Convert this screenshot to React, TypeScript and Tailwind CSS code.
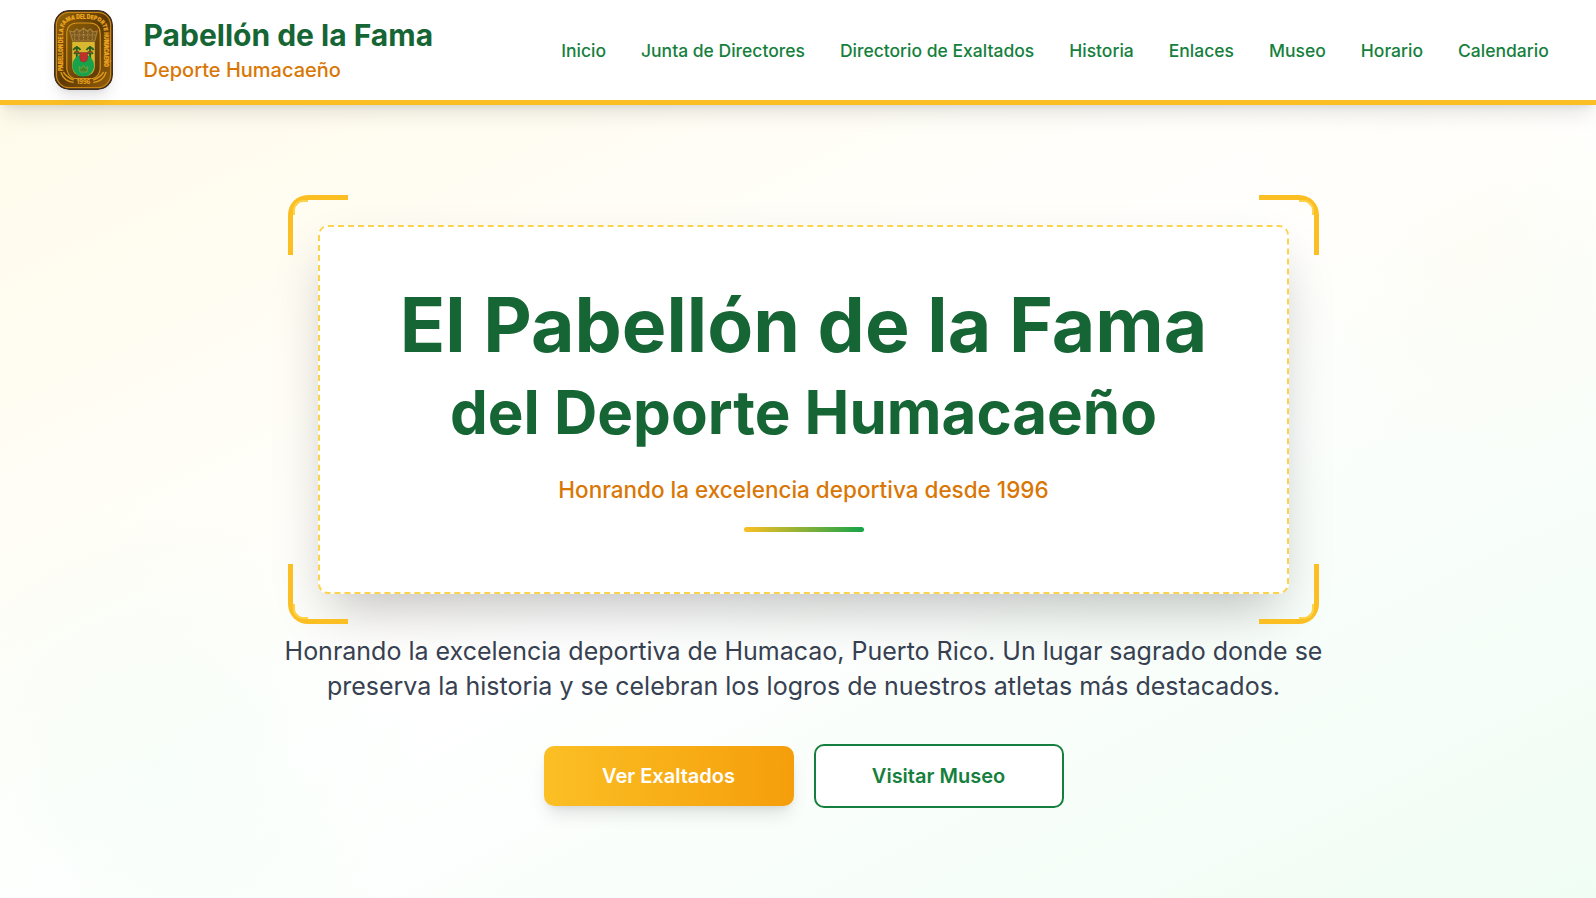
const navItems = ['Inicio', 'Junta de Directores', 'Directorio de Exaltados', 'Historia', 'Enlaces', 'Museo', 'Horario', 'Calendario'];

function Emblem() {
  return (
    <svg viewBox="0 0 60 80" preserveAspectRatio="none" className="h-20 w-[59px] shrink-0 rounded-[15px] shadow-[0_10px_15px_-3px_rgba(0,0,0,0.1),0_4px_6px_-4px_rgba(0,0,0,0.1)]" role="img" aria-label="Emblema">
      <defs>
        <linearGradient id="bronze" x1="0" y1="0" x2="1" y2="1">
          <stop offset="0" stopColor="#946309" />
          <stop offset="0.5" stopColor="#5c3904" />
          <stop offset="1" stopColor="#945e0a" />
        </linearGradient>
        <linearGradient id="panel" x1="0" y1="0" x2="1" y2="1">
          <stop offset="0" stopColor="#865a08" />
          <stop offset="1" stopColor="#5f3c08" />
        </linearGradient>
        <path id="arc" d="M9.2 61 V23 Q9.2 9.4 23 9.4 H37 Q50.8 9.4 50.8 23 V61" />
      </defs>
      <rect width="60" height="80" rx="15" fill="#3f3020" />
      <rect x="2.4" y="2.4" width="55.2" height="75.2" rx="12.8" fill="url(#bronze)" stroke="#c98412" strokeWidth="1.3" />
      <path d="M13 59 V24 Q13 13 24 13 H36 Q47 13 47 24 V59 Q46 66 40 68.5 H20 Q14 66 13 59 Z" fill="url(#panel)" stroke="#d8921a" strokeWidth="1.2" />
      <text fontFamily="Inter, sans-serif" fontWeight="900" fontSize="5.8" fill="#eba41f" stroke="#eba41f" strokeWidth="0.2">
        <textPath href="#arc" textLength="130" lengthAdjust="spacingAndGlyphs">PABELLON DE LA FAMA DEL DEPORTE HUMACAEÑO</textPath>
      </text>
      <path d="M16 21 l4 1 3-3 3.5 2 3.5-3 3.5 3 3.5-2 3 3 4-1 -2.5 10 H19 Z" fill="#7d5a20" stroke="#a98038" strokeWidth="1.1" />
      <path d="M18 25 H42 M21 21 V30 M25.5 21 V30 M30 19 V30 M34.5 21 V30 M39 21 V30" stroke="#b58c42" strokeWidth="1" strokeDasharray="1.5 1" />
      <path d="M18.5 32 H41.5 V56 Q41.5 66 30 66 Q18.5 66 18.5 56 Z" fill="#d9b72e" />
      <path d="M19.5 40 q3.7-5 7.4 0 M33 40 q3.7-5 7.4 0 M20.5 44 q2.7-5 5.4 0 M34 44 q2.7-5 5.4 0 M23.2 36 V49 M36.7 36 V49" fill="none" stroke="#28601f" strokeWidth="2" />
      <path d="M21 42 h4.5 M34.5 42 H39" stroke="#a8472a" strokeWidth="1.4" />
      <circle cx="29.7" cy="55.5" r="11" fill="#18a24c" />
      <path d="M26.3 42.5 H34 V48 Q34 52 30.2 52 Q26.3 52 26.3 48 Z" fill="#c3302c" stroke="#8a2b20" strokeWidth="0.5" />
      <path d="M25.5 56.5 l2.2 2 2.3-3 2.3 3 2.2-2 -1 5.5 H26.5 Z" fill="#3f8a2c" stroke="#9aa336" strokeWidth="0.7" />
      <path d="M7 62 Q10 71.5 20 72.5 M53 62 Q50 71.5 40 72.5 M9.5 62 Q13 67.5 20 70 M50.5 62 Q47 67.5 40 70" fill="none" stroke="#d8951a" strokeWidth="1.5" />
      <text x="30" y="74" textAnchor="middle" fontFamily="Inter, sans-serif" fontWeight="900" fontSize="5.6" fill="#e39c1c">1996</text>
    </svg>
  );
}

function Corner({ className, accent }: { className: string; accent: string }) {
  return (
    <div className={`absolute size-[60px] border-[#fbbf24] ${className}`}>
      <div className={`absolute size-[15px] border-[#fcd34d] ${accent}`} />
    </div>
  );
}

export default function App() {
  return (
    <div className="flex h-[898px] flex-col overflow-hidden bg-white font-['Inter',sans-serif]">
      <header className="relative z-10 flex h-[105px] shrink-0 items-center justify-between border-b-[5px] border-[#fbbf24] bg-white pr-[47.3px] pl-[54px] shadow-[0_12px_20px_-4px_rgba(0,0,0,0.11),0_4px_8px_-4px_rgba(0,0,0,0.1)]">
        <div className="flex items-center gap-[30.5px]">
          <Emblem />
          <div>
            <div className="text-[30px] leading-[40px] font-bold text-[#166534]">Pabellón de la Fama</div>
            <div className="text-[20px] leading-[30px] font-medium text-[#d97706]">Deporte Humacaeño</div>
          </div>
        </div>
        <nav className="flex gap-[35px] text-[17.5px] leading-[25px] font-medium whitespace-nowrap text-[#15803d]">
          {navItems.map((item) => (
            <a key={item} href="#">{item}</a>
          ))}
        </nav>
      </header>

      <main className="relative isolate flex flex-1 flex-col items-center overflow-hidden bg-[linear-gradient(to_bottom_right,#fffbeb_0%,#ffffff_50%,#f0fdf4_100%)] pt-[120px] pl-[11px]">
        <div className="absolute top-[-100px] right-[-130px] -z-10 size-[500px] bg-[radial-gradient(circle,rgba(254,243,199,0.14)_0%,rgba(254,243,199,0)_70%)]" />
        <div className="absolute bottom-[-130px] left-[-110px] -z-10 size-[530px] bg-[radial-gradient(circle,rgba(220,252,231,0.22)_0%,rgba(220,252,231,0)_70%)]" />
        <section className="relative flex h-[369px] w-[971px] flex-col items-center rounded-[10px] border-2 border-dashed border-[#fcd34d] bg-white pt-[60px] shadow-[0_25px_50px_-12px_rgba(0,0,0,0.25)]">
          <Corner className="-top-8 -left-8 rounded-tl-[20px] border-t-[5px] border-l-[5px]" accent="top-0 left-0 rounded-tl-[10px] border-t-2 border-l-2" />
          <Corner className="-top-8 -right-8 rounded-tr-[20px] border-t-[5px] border-r-[5px]" accent="top-0 right-0 rounded-tr-[10px] border-t-2 border-r-2" />
          <Corner className="-bottom-8 -left-8 rounded-bl-[20px] border-b-[5px] border-l-[5px]" accent="bottom-0 left-0 rounded-bl-[10px] border-b-2 border-l-2" />
          <Corner className="-right-8 -bottom-8 rounded-br-[20px] border-r-[5px] border-b-[5px]" accent="right-0 bottom-0 rounded-br-[10px] border-r-2 border-b-2" />
          <h1 className="flex flex-col items-center font-bold whitespace-nowrap text-[#166534]">
            <span className="text-[75px] leading-[75px]">El Pabellón de la Fama</span>
            <span className="mt-[20px] text-[60px] leading-[60px]">del Deporte Humacaeño</span>
          </h1>
          <p className="mt-[30px] text-[22.5px] leading-[35px] font-medium text-[#d97706]">Honrando la excelencia deportiva desde 1996</p>
          <div className="mt-5 h-[5px] w-[120px] rounded-full bg-[linear-gradient(to_right,#fbbf24,#16a34a)]" />
        </section>
        <p className="mt-[40px] w-[1120px] text-center text-[25px] leading-[35px] text-[#374151]">
          Honrando la excelencia deportiva de Humacao, Puerto Rico. Un lugar sagrado donde se
          <br />
          preserva la historia y se celebran los logros de nuestros atletas más destacados.
        </p>
        <div className="mt-10 flex items-center gap-5 text-[20px] leading-[30px] font-semibold">
          <button className="h-[60px] w-[250px] rounded-[10px] bg-[linear-gradient(to_right,#fbbf24,#f59e0b)] text-white shadow-[0_12px_18px_-4px_rgba(0,0,0,0.11),0_4px_8px_-4px_rgba(0,0,0,0.1)]">Ver Exaltados</button>
          <button className="h-[64px] w-[250px] rounded-[10px] border-2 border-[#15803d] bg-white text-[#15803d]">Visitar Museo</button>
        </div>
      </main>
    </div>
  );
}
